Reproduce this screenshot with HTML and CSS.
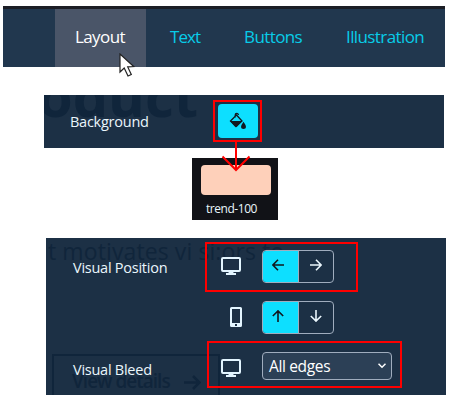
FILE: index.html
```html
<!DOCTYPE html>
<html lang="en">
<head>
<meta charset="utf-8">
<title>Layout settings</title>
<link rel="stylesheet" href="styles.css">
</head>
<body>
<svg class="defs" width="0" height="0">
  <symbol id="desktop" viewBox="0 0 20 18"><path fill="none" stroke="currentColor" stroke-width="2" d="M2 1h16a1 1 0 0 1 1 1v11a1 1 0 0 1-1 1H2a1 1 0 0 1-1-1V2a1 1 0 0 1 1-1z"/><path fill="currentColor" d="M8 14h4l.6 2H15v2H5v-2h2.400z"/></symbol>
  <symbol id="arrow" viewBox="0 0 12 12"><path fill="none" stroke="currentColor" stroke-width="1.600" d="M12 6H1M6 .8.900 6 6 11.200"/></symbol>
</svg>
<nav class="tabs">
  <a class="tab active">Layout</a><a class="tab text">Text</a><a class="tab buttons">Buttons</a><a class="tab illustration">Illustration</a>
  <svg class="cursor" width="17" height="25" viewBox="0 0 17 25"><path fill="#fff" stroke="#222" stroke-width="1.200" d="M1 1v18l4.200-4 3.800 8 3.300-1.500-3.600-7.600 6-.4z"/></svg>
</nav>
<section class="background">
  <span class="ghost product">oduct</span>
  <span class="label">Background</span>
  <button class="fill"><svg width="18" height="18" viewBox="0 0 18 18"><path fill="none" stroke="#111820" stroke-width="1.300" d="M6.200 5.500V3a1.600 1.600 0 0 1 3.200 0M7.500 3 1.500 9l5.500 5.500L13 9z"/><path fill="#111820" d="M1 9h12l-5 5.400q-1 .8-2 0zM14.500 9.800q5 6.800 0 7.200-5-.4 0-7.200z"/></svg></button>
  <div class="mark mark-fill"></div>
</section>
<figure class="swatch"><div class="color"></div><figcaption>trend-100</figcaption></figure>
<svg class="pointer" width="30" height="32" viewBox="0 0 30 32"><path fill="none" stroke="red" stroke-width="2" d="M15 0v28M1.500 14.500 15 28l13.500-13.500"/></svg>
<section class="visual">
  <span class="ghost motivates">t motivates vi si:ors to</span>
  <div class="ghost details"><span>View details</span><svg width="17" height="15" viewBox="0 0 17 15"><path fill="none" stroke="currentColor" stroke-width="2.500" d="M0 7.500h15M9 1l6.500 6.500L9 14"/></svg></div>
  <div class="row first">
    <span class="label position">Visual Position</span>
    <svg class="device" width="20" height="18"><use href="#desktop"/></svg>
    <div class="toggle"><button class="on"><svg width="12" height="12"><use href="#arrow"/></svg></button><button><svg class="right" width="12" height="12"><use href="#arrow"/></svg></button></div>
    <div class="mark mark-position"></div>
  </div>
  <div class="row second">
    <svg class="device phone" width="12" height="20" viewBox="0 0 12 20"><path fill="currentColor" fill-rule="evenodd" d="M1.500 0h9Q12 0 12 1.500v17q0 1.500-1.500 1.500h-9Q0 20 0 18.500v-17Q0 0 1.500 0zM2 2v14h8V2zM5 17v2h2v-2z"/></svg>
    <div class="toggle"><button class="on"><svg class="up" width="12" height="12"><use href="#arrow"/></svg></button><button><svg class="down" width="12" height="12"><use href="#arrow"/></svg></button></div>
  </div>
  <div class="row third">
    <span class="label bleed">Visual Bleed</span>
    <svg class="device" width="20" height="18"><use href="#desktop"/></svg>
    <div class="select"><span>All edges</span><svg width="8" height="6" viewBox="0 0 8 6"><path fill="none" stroke="currentColor" stroke-width="1.500" d="m.5.8 3.500 3.500L7.500.8"/></svg></div>
    <div class="mark mark-bleed"></div>
  </div>
</section>
</body>
</html>
```
FILE: styles.css
```css
* { box-sizing: border-box; }
body { margin: 0; padding-top: 6px; width: 449px; height: 402px; overflow: hidden; background: #fff; font-family: "Noto Sans", "Open Sans", sans-serif; color: #eaf6fc; }
svg { display: block; flex: none; }
.defs { position: absolute; }
button { border: 0; padding: 0; margin: 0; background: none; color: inherit; display: flex; align-items: center; justify-content: center; }
.tabs { position: relative; display: flex; width: 442px; height: 61px; margin-left: 3px; padding-left: 52px; border-top: 3px solid #1c1e25; background: #21374e; font-family: "Open Sans", sans-serif; font-size: 17px; line-height: 56px; white-space: nowrap; color: #08cce8; }
.tab { flex: none; padding-left: 20px; letter-spacing: -.6px; }
.active { width: 91px; background: #4a5568; color: #fff; }
.text { width: 78px; padding-left: 24px; letter-spacing: -.9px; }
.buttons { width: 102px; }
.illustration { width: 100px; }
.cursor { position: absolute; left: 116px; top: 44px; }
.background { position: relative; display: flex; width: 400px; height: 53px; margin: 28px 0 0 44px; background: #1c3045; }
.label { position: relative; font-family: "Open Sans", sans-serif; font-size: 14.500px; white-space: nowrap; letter-spacing: -.25px; }
.background .label { width: 174px; padding: 17px 0 0 26px; line-height: 20px; }
.ghost { position: absolute; color: #10253b; white-space: nowrap; }
.product { left: -6px; top: -32px; height: 85px; width: 180px; clip-path: inset(32px 0 0 6px); font-family: "Open Sans", sans-serif; font-size: 56px; line-height: 64px; font-weight: 700; }
.fill { position: relative; width: 40px; height: 34px; margin-top: 9px; border-radius: 4px; background: #0ddfff; }
.mark { position: absolute; border: 2px solid red; }
.mark-fill { left: 169px; top: 5px; width: 49px; height: 42px; }
.swatch { width: 86px; height: 62px; margin: 10px 0 0 192px; padding: 7px 9px 0; background: #111217; }
.color { width: 70px; height: 30px; border-radius: 4px; background: #fed0ba; }
.swatch figcaption { padding-left: 5px; font-family: "Open Sans", sans-serif; font-size: 12px; line-height: 16px; margin-top: 6px; letter-spacing: -.45px; white-space: nowrap; }
.pointer { position: absolute; left: 221px; top: 142px; }
.visual { position: relative; width: 400px; height: 157px; margin: 18px 0 0 46px; background: #1c3045; overflow: hidden; }
.motivates { left: 2px; top: -4px; font-family: "Open Sans", sans-serif; font-size: 23px; line-height: 34px; letter-spacing: .1px; }
.details { left: 6px; top: 116px; width: 168px; height: 50px; border: 2px solid; display: flex; padding: 11px 0 0 18px; font-family: "Open Sans", sans-serif; font-size: 19px; line-height: 28px; font-weight: 600; letter-spacing: -1px; }
.details svg { margin: 8px 0 0 14px; }
.row { position: relative; display: flex; height: 51px; }
.row .label { width: 175px; padding-left: 27px; line-height: 20px; }
.first { padding-top: 12px; }
.position { margin-top: 8px; }
.device { position: relative; color: #e3f5ff; }
.first .device { margin-top: 7px; }
.toggle { position: relative; display: flex; width: 72px; height: 33px; margin-left: 21px; border: 1px solid #a0adbe; border-radius: 4px; overflow: hidden; }
.toggle button { width: 33px; height: 31px; padding-bottom: 4px; }
.toggle .on { width: 37px; margin: -1px 0 -1px -1px; height: 33px; padding-right: 4px; border-right: 1px solid #a0adbe; background: #0ddfff; color: #11171e; }
.right { transform: rotate(180deg); }
.up { transform: rotate(90deg); }
.down { transform: rotate(-90deg); }
.second { padding: 12px 0 0 184px; }
.phone { margin-top: 6px; }
.second .toggle { margin-left: 20px; }
.third { padding-top: 12px; height: 55px; }
.bleed { margin-top: 8px; }
.third .device { margin-top: 7px; }
.select { position: relative; display: flex; align-items: center; justify-content: space-between; width: 130px; height: 28px; margin-left: 21px; padding: 0 5px 0 6px; border: 1px solid #a0adbe; border-radius: 4px; background: #2c4056; color: #fff; font-family: "Open Sans", sans-serif; font-size: 15.500px; letter-spacing: -.35px; white-space: nowrap; }
.mark-position { left: 159px; top: 4px; width: 153px; height: 50px; }
.mark-bleed { left: 161px; top: 1px; width: 195px; height: 47px; }
```
